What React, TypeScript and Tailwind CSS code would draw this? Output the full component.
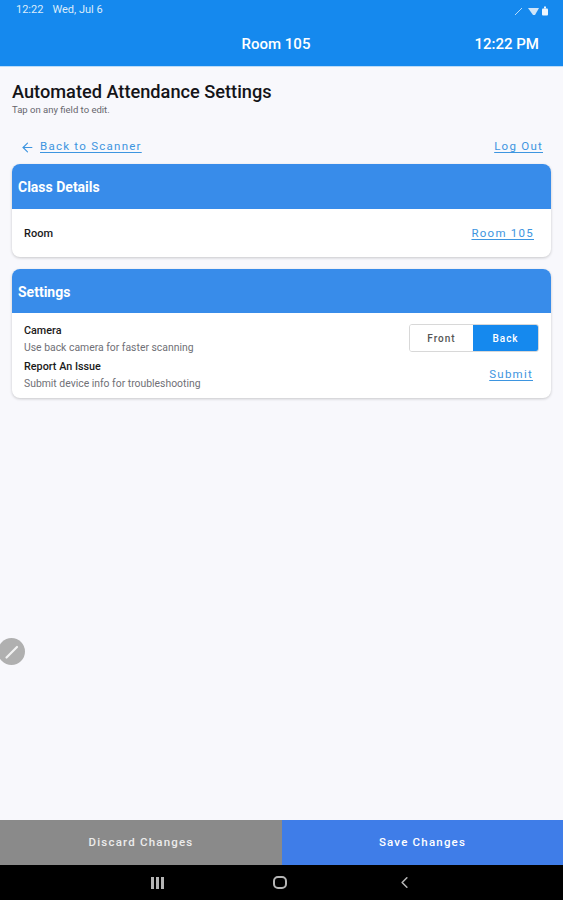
import { ArrowLeft, ChevronLeft } from "lucide-react";

const font = { fontFamily: "Roboto, sans-serif" };

function Card({ title, tall, children }: { title: string; tall?: boolean; children: React.ReactNode }) {
  return (
    <div className="rounded-lg bg-white shadow-[0_1px_3px_rgba(0,0,0,0.2)] overflow-hidden">
      <div className={`${tall ? "h-[45px]" : "h-[44px]"} bg-[#388cea] pl-[6px] pt-[2px] flex items-center text-[14px] font-bold text-white`}>
        {title}
      </div>
      {children}
    </div>
  );
}

function LinkText({ children }: { children: React.ReactNode }) {
  return (
    <span className="text-[11.5px] tracking-[1.25px] text-[#3d95e0] underline underline-offset-2">
      {children}
    </span>
  );
}

export default function App() {
  return (
    <div style={font} className="relative h-[900px] w-[563px] overflow-hidden flex flex-col bg-[#f8f8fc]">
      {/* status + title bar */}
      <div className="h-[66px] bg-[#1589ee] text-white flex flex-col shrink-0">
        <div className="h-[19px] pl-[16px] pr-[14px] pt-[2px] flex items-center justify-between text-[11px] text-[#dcecfb]">
          <div className="flex gap-[9px]">
            <span>12:22</span>
            <span>Wed, Jul 6</span>
          </div>
          <svg width="34" height="12" viewBox="0 0 34 12" fill="none">
            <path d="M0 10 L7 3" stroke="#b9dcf8" strokeWidth="1" />
            <path d="M13 3 H24 L20 10 H18 Z" fill="#cfe5f9" />
            <rect x="27" y="3.5" width="6" height="7" rx="1" fill="#eef6fd" />
            <rect x="29" y="1.5" width="2" height="2" fill="#eef6fd" />
          </svg>
        </div>
        <div className="relative flex-1 flex items-center justify-center pr-[11px] pt-[3px]">
          <span className="text-[15px] font-medium">Room 105</span>
          <span className="absolute right-[24px] text-[15px] font-medium">12:22 PM</span>
        </div>
      </div>
      <div className="h-[1px] bg-[#bcdcf8] shrink-0" />

      <main className="flex-1 px-[12px]">
        <h1 className="mt-[13px] text-[18.2px] leading-[24px] font-medium text-[#141418]">
          Automated Attendance Settings
        </h1>
        <p className="text-[9.5px] leading-[11px] text-[#66666c]">Tap on any field to edit.</p>

        <div className="mt-[24px] h-[16px] pl-[8px] pr-[8px] flex items-center justify-between">
          <div className="flex items-center gap-[5px]">
            <ArrowLeft className="w-[15px] h-[15px] text-[#3d95e0]" strokeWidth={1.75} />
            <LinkText>Back to Scanner</LinkText>
          </div>
          <LinkText>Log Out</LinkText>
        </div>

        <div className="mt-[9px] flex flex-col gap-[12px]">
          <Card title="Class Details" tall>
            <div className="h-[48px] pl-[12px] pr-[17px] pt-[2px] flex items-center justify-between">
              <span className="text-[11px] font-medium text-[#1a1a1a]">Room</span>
              <LinkText>Room 105</LinkText>
            </div>
          </Card>

          <Card title="Settings">
            <div className="h-[85px] pl-[12px] pr-[12px] pt-[11px] flex flex-col">
              <div className="h-[36px] flex items-start justify-between">
                <div>
                  <div className="text-[10.8px] leading-[14px] font-medium text-[#1a1a1a]">Camera</div>
                  <div className="text-[10.4px] leading-[19px] text-[#707076]">Use back camera for faster scanning</div>
                </div>
                <div className="flex h-[28px] w-[130px] rounded-[3px] border border-[#d8d8d8] overflow-hidden text-[10px] tracking-[1px]">
                  <div className="flex-1 flex items-center justify-center text-[#555] font-medium bg-white">Front</div>
                  <div className="w-[65px] flex items-center justify-center text-white font-medium bg-[#1589ee]">Back</div>
                </div>
              </div>
              <div className="flex items-start justify-between">
                <div>
                  <div className="text-[10.8px] leading-[14px] font-medium text-[#1a1a1a]">Report An Issue</div>
                  <div className="text-[10.4px] leading-[19px] text-[#707076]">Submit device info for troubleshooting</div>
                </div>
                <div className="pr-[6px] pt-[1px]">
                  <LinkText>Submit</LinkText>
                </div>
              </div>
            </div>
          </Card>
        </div>
      </main>

      {/* floating edit handle */}
      <div className="absolute left-[-2px] top-[638px] w-[27px] h-[27px] rounded-full bg-[#b0b0b0] flex items-center justify-center">
        <svg width="16" height="16" viewBox="0 0 16 16">
          <path d="M2.5 13.5 L13 3" stroke="#f2f2f2" strokeWidth="2.2" strokeLinecap="round" />
        </svg>
      </div>

      {/* action buttons */}
      <div className="h-[45px] flex shrink-0 text-[11.5px] font-medium tracking-[1.2px]">
        <div className="w-[282px] bg-[#8a8a8a] text-[#ececec] flex items-center justify-center pt-[1px]">Discard Changes</div>
        <div className="flex-1 bg-[#3f7de8] text-white flex items-center justify-center pt-[1px]">Save Changes</div>
      </div>

      {/* android nav */}
      <div className="h-[35px] bg-black shrink-0 relative flex items-center justify-center">
        <div className="flex items-center gap-[2px] absolute left-[151px]">
          <div className="w-[3px] h-[12px] bg-[#b5b5b5]" />
          <div className="w-[3px] h-[12px] bg-[#b5b5b5]" />
          <div className="w-[3px] h-[12px] bg-[#b5b5b5]" />
        </div>
        <div className="absolute left-[273px] w-[14px] h-[13px] rounded-[5px] border-2 border-[#b5b5b5]" />
        <ChevronLeft className="absolute left-[395px] w-[19px] h-[19px] text-[#b5b5b5]" strokeWidth={2} />
      </div>
    </div>
  );
}
